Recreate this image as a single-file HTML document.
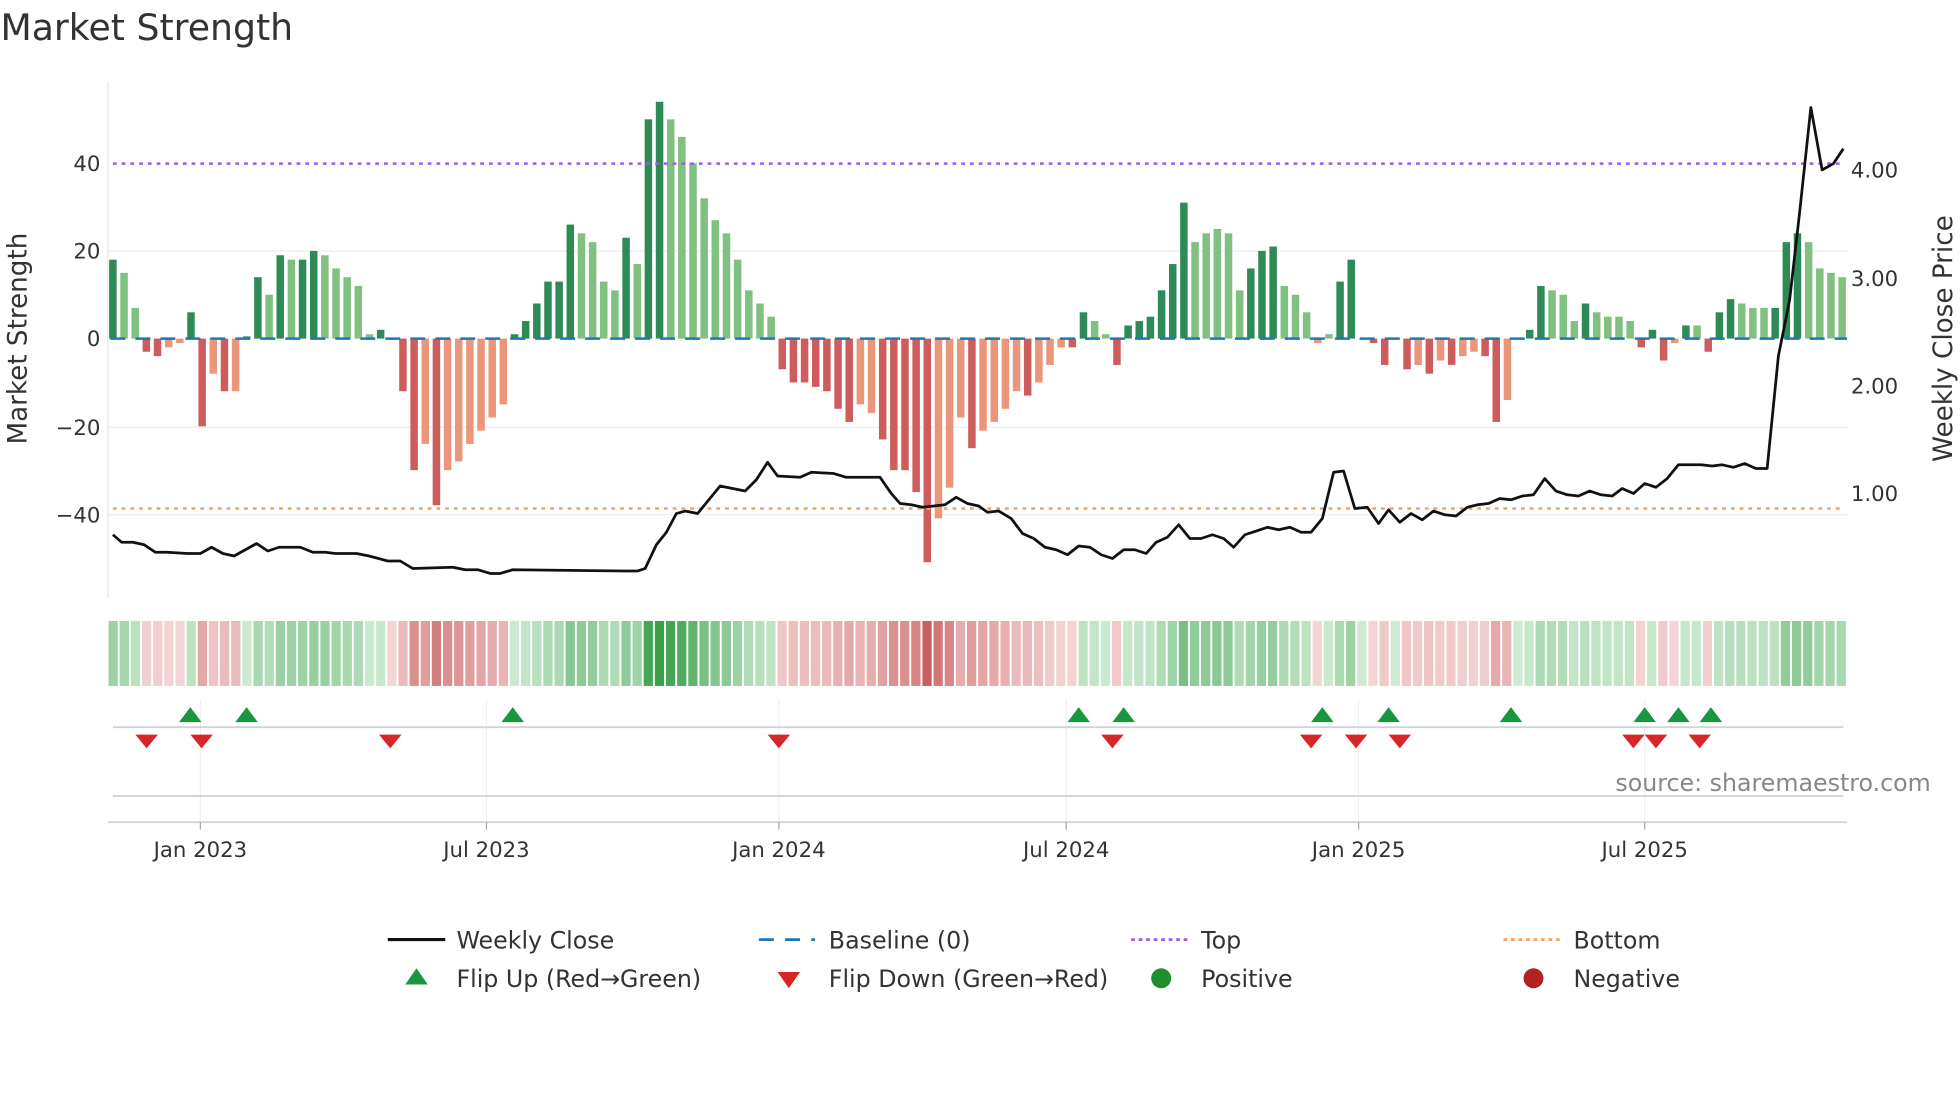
<!DOCTYPE html>
<html><head><meta charset="utf-8"><style>
html,body{margin:0;padding:0;background:#fff;}
svg{display:block;font-family:"DejaVu Sans","Liberation Sans",sans-serif;}
</style></head><body>
<svg id="s" width="1960" height="1102" viewBox="0 0 1568 882" xmlns="http://www.w3.org/2000/svg">
<text x="0" y="32" font-size="29" fill="#333">Market Strength</text>
<g stroke="#eef0f3" stroke-width="1.2">
<line x1="86" y1="201" x2="1478" y2="201"/><line x1="86" y1="342" x2="1478" y2="342"/><line x1="86" y1="412" x2="1478" y2="412"/>
</g>
<line x1="86" y1="65" x2="86" y2="478" stroke="#e6e6e6" stroke-width="1"/>
<g id="bars"></g>
<line x1="88" y1="271" x2="1478" y2="271" stroke="#1f77b4" stroke-width="2" stroke-dasharray="12,8"/>
<line x1="90" y1="131" x2="1476" y2="131" stroke="#9b5de5" stroke-width="2" stroke-dasharray="3,4"/>
<line x1="90" y1="407" x2="1476" y2="407" stroke="#f4a261" stroke-width="2" stroke-dasharray="3,4"/>
<polyline id="price" fill="none" stroke="#111" stroke-width="2.2" stroke-linejoin="round"/>
<g font-size="17" fill="#333">
<text x="80" y="137" text-anchor="end">40</text>
<text x="80" y="207" text-anchor="end">20</text>
<text x="80" y="277" text-anchor="end">0</text>
<text x="80" y="348" text-anchor="end">−20</text>
<text x="80" y="418" text-anchor="end">−40</text>
<text x="1481" y="142">4.00</text>
<text x="1481" y="229">3.00</text>
<text x="1481" y="315">2.00</text>
<text x="1481" y="401">1.00</text>
</g>
<text transform="translate(21,271) rotate(-90)" font-size="21" fill="#333" text-anchor="middle">Market Strength</text>
<text transform="translate(1562,271) rotate(-90)" font-size="21" fill="#333" text-anchor="middle">Weekly Close Price</text>
<g id="heat"></g>
<g stroke="#eef0f3" stroke-width="1">
<line x1="160" y1="560" x2="160" y2="658"/><line x1="389" y1="560" x2="389" y2="658"/><line x1="623" y1="560" x2="623" y2="658"/><line x1="853" y1="560" x2="853" y2="658"/><line x1="1087" y1="560" x2="1087" y2="658"/><line x1="1316" y1="560" x2="1316" y2="658"/>
</g>
<line x1="90" y1="582" x2="1475" y2="582" stroke="#d0d3d8" stroke-width="1.5"/>
<line x1="90" y1="637" x2="1475" y2="637" stroke="#d0d3d8" stroke-width="1.5"/>
<line x1="86" y1="658" x2="1478" y2="658" stroke="#d0d3d8" stroke-width="1.5"/>
<g stroke="#aaa" stroke-width="1">
<line x1="160" y1="658" x2="160" y2="664"/><line x1="389" y1="658" x2="389" y2="664"/><line x1="623" y1="658" x2="623" y2="664"/><line x1="853" y1="658" x2="853" y2="664"/><line x1="1087" y1="658" x2="1087" y2="664"/><line x1="1316" y1="658" x2="1316" y2="664"/>
</g>
<g id="flips"></g>
<text x="1545" y="633" font-size="19" fill="#888" text-anchor="end">source: sharemaestro.com</text>
<g font-size="17" fill="#333" text-anchor="middle">
<text x="160" y="686">Jan 2023</text><text x="389" y="686">Jul 2023</text><text x="623" y="686">Jan 2024</text><text x="853" y="686">Jul 2024</text><text x="1087" y="686">Jan 2025</text><text x="1316" y="686">Jul 2025</text>
</g>
<g font-size="19" fill="#333">
<line x1="310" y1="752" x2="356" y2="752" stroke="#111" stroke-width="2.5"/><text x="365" y="759">Weekly Close</text>
<line x1="607" y1="752" x2="652" y2="752" stroke="#1f77b4" stroke-width="2.2" stroke-dasharray="12,9"/><text x="663" y="759">Baseline (0)</text>
<line x1="905" y1="752" x2="950" y2="752" stroke="#9b5de5" stroke-width="2.2" stroke-dasharray="3,3"/><text x="961" y="759">Top</text>
<line x1="1203" y1="752" x2="1248" y2="752" stroke="#f4a261" stroke-width="2.2" stroke-dasharray="3,3"/><text x="1259" y="759">Bottom</text>
<polygon points="324,788 342,788 333,775" fill="#1a9641"/><text x="365" y="790">Flip Up (Red→Green)</text>
<polygon points="622,778 640,778 631,791" fill="#d7262a"/><text x="663" y="790">Flip Down (Green→Red)</text>
<circle cx="929" cy="783" r="8" fill="#1e8e2e"/><text x="961" y="790">Positive</text>
<circle cx="1227" cy="783" r="8" fill="#b22222"/><text x="1259" y="790">Negative</text>
</g>
</svg>
<script>
var D="#2e8b57",L="#80c080",R="#cd5c5c",O="#e9967a";
var v=[[18,D],[15,L],[7,L],[-3,R],[-4,R],[-2,O],[-1,O],[6,D],[-20,R],[-8,O],[-12,R],[-12,O],[0.5,D],[14,D],[10,L],[19,D],[18,L],[18,D],[20,D],[19,L],[16,L],[14,L],[12,L],[1,L],[2,D],[-0.3,O],[-12,R],[-30,R],[-24,O],[-38,R],[-30,O],[-28,O],[-24,O],[-21,O],[-18,O],[-15,O],[1,D],[4,D],[8,D],[13,D],[13,D],[26,D],[24,L],[22,L],[13,L],[11,L],[23,D],[17,L],[50,D],[54,D],[50,L],[46,L],[40,L],[32,L],[27,L],[24,L],[18,L],[11,L],[8,L],[5,L],[-7,R],[-10,R],[-10,R],[-11,R],[-12,R],[-16,R],[-19,R],[-15,O],[-17,O],[-23,R],[-30,R],[-30,R],[-35,R],[-51,R],[-41,O],[-34,O],[-18,O],[-25,R],[-21,O],[-19,O],[-16,O],[-12,O],[-13,R],[-10,O],[-6,O],[-2,O],[-2,R],[6,D],[4,L],[1,L],[-6,R],[3,D],[4,D],[5,D],[11,D],[17,D],[31,D],[22,L],[24,L],[25,L],[24,L],[11,L],[16,D],[20,D],[21,D],[12,L],[10,L],[6,L],[-1,O],[1,L],[13,D],[18,D],[0,L],[-1,R],[-6,R],[0,L],[-7,R],[-6,O],[-8,R],[-5,O],[-6,R],[-4,O],[-3,O],[-4,R],[-19,R],[-14,O],[0,L],[2,D],[12,D],[11,L],[10,L],[4,L],[8,D],[6,L],[5,L],[5,L],[4,L],[-2,R],[2,D],[-5,R],[-1,O],[3,D],[3,L],[-3,R],[6,D],[9,D],[8,L],[7,L],[7,L],[7,D],[22,D],[24,D],[22,L],[16,L],[15,L],[14,L]];
var ns="http://www.w3.org/2000/svg",bars=document.getElementById("bars"),heat=document.getElementById("heat");
function el(p,t,a){var e=document.createElementNS(ns,t);for(var k in a)e.setAttribute(k,a[k]);p.appendChild(e);}
var n=v.length,step=(1474-90)/(n-1),sc=3.51;
function mix(a,b,t){var r=[];for(var i=0;i<3;i++)r.push(Math.round(a[i]+(b[i]-a[i])*t));return"rgb("+r+")";}
for(var i=0;i<n;i++){var x=90+i*step,h=v[i][0]*sc;
 el(bars,"rect",{x:x-3,y:h>=0?271-h:271,width:6,height:Math.max(Math.abs(h),0.8),fill:v[i][1]});
 var val=v[i][0],c;
 if(val>=0){c=mix([205,235,210],[60,160,75],Math.min(val/54,1));}
 else{c=mix([245,215,215],[200,95,95],Math.min(-val/51,1));}
 el(heat,"rect",{x:86+i*(1392/n)+0.5,y:497,width:1392/n-1.5,height:52,fill:c});
}
var p=[[90,428],[97,434],[106,434],[115,436],[124,442],[133,442],[150,443],[160,443],[169,438],[178,443],[187,445],[196,440],[205,435],[214,441],[223,438],[240,438],[250,442],[260,442],[268,443],[285,443],[295,445],[310,449],[320,449],[330,455],[362,454],[372,456],[382,456],[392,459],[400,459],[410,456],[500,457],[510,457],[516,455],[525,436],[533,426],[541,411],[548,409],[558,411],[567,400],[576,389],[586,391],[596,393],[605,384],[614,370],[622,381],[640,382],[649,378],[667,379],[677,382],[704,382],[713,395],[720,403],[729,404],[738,406],[756,404],[765,398],[774,403],[783,405],[790,410],[799,409],[809,415],[818,427],[827,431],[836,438],[845,440],[854,444],[863,437],[872,438],[881,444],[890,447],[899,440],[908,440],[917,443],[925,434],[934,430],[943,420],[952,431],[961,431],[970,428],[979,431],[987,438],[996,428],[1005,425],[1014,422],[1023,424],[1032,422],[1041,426],[1049,426],[1058,415],[1067,378],[1075,377],[1084,407],[1094,406],[1103,419],[1111,408],[1120,418],[1129,411],[1138,416],[1147,409],[1156,412],[1165,413],[1174,406],[1182,404],[1191,403],[1200,399],[1209,400],[1218,397],[1227,396],[1236,383],[1245,393],[1254,396],[1263,397],[1272,393],[1281,396],[1290,397],[1298,391],[1307,395],[1316,387],[1325,390],[1334,383],[1343,372],[1352,372],[1361,372],[1370,373],[1378,372],[1387,374],[1396,371],[1405,375],[1414,375],[1423,285],[1432,240],[1440,170],[1449,86],[1458,136],[1467,131],[1475,119]];
document.getElementById("price").setAttribute("points",p.map(function(q){return q.join(",")}).join(" "));
var f=document.getElementById("flips");
[152,197,410,863,899,1058,1111,1209,1316,1343,1369].forEach(function(x){el(f,"polygon",{points:(x-9)+",578 "+(x+9)+",578 "+x+",566",fill:"#1a9641"});});
[117,161,312,623,890,1049,1085,1120,1307,1325,1360].forEach(function(x){el(f,"polygon",{points:(x-9)+",588 "+(x+9)+",588 "+x+",599",fill:"#d7262a"});});
</script>
</body></html>
